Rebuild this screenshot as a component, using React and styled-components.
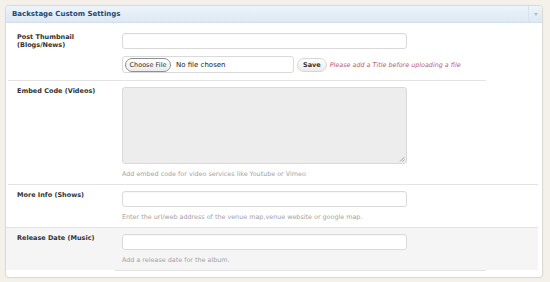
import React from "react";
import styled, { createGlobalStyle } from "styled-components";

const Global = createGlobalStyle`
  html, body { margin: 0; padding: 0; background: #f3f1ea; }
  body { font-family: "DejaVu Sans", "Liberation Sans", sans-serif; }
  #root { width: 550px; height: 282px; }
`;

const Page = styled.div`
  padding: 5px 7px 0 5px;
`;

const Panel = styled.div`
  border: 1px solid #dcdad3;
  border-radius: 4px;
  background: #fff;
  box-shadow: 0 0 2px rgba(0,0,0,0.06);
  overflow: hidden;
  padding-bottom: 6px;
`;

const Header = styled.div`
  height: 16px;
  display: flex;
  align-items: center;
  justify-content: space-between;
  background: linear-gradient(#edf4fb, #dce8f4);
  border-bottom: 1px solid #d3e0ec;
`;

const Title = styled.h3`
  margin: 0 0 0 6px;
  font-size: 7px;
  font-weight: bold;
  color: #244a70;
`;

const Toggle = styled.div`
  width: 13px;
  height: 16px;
  border-left: 1px solid #d6e2ee;
  display: flex;
  align-items: center;
  justify-content: center;
  &::after {
    content: "";
    border-left: 2.5px solid transparent;
    border-right: 2.5px solid transparent;
    border-top: 3px solid #b5bcc4;
  }
`;

const Body = styled.div`
  padding-top: 4px;
  margin-right: 4px;
`;

const Row = styled.div`
  display: grid;
  grid-template-columns: 116px 1fr;
  padding: ${(p) => p.$pad || "6px 0 5px"};
  background: ${(p) => (p.$shaded ? "#f5f5f5" : "transparent")};
`;

const Label = styled.div`
  padding: 1px 0 0 11px;
  font-size: 6.5px;
  line-height: 7.5px;
  font-weight: bold;
  color: #333;
`;

const Field = styled.div`
  display: flex;
  flex-direction: column;
  align-items: flex-start;
`;

const TextInput = styled.div`
  box-sizing: border-box;
  width: 285px;
  height: 16px;
  border: 1px solid #dadada;
  border-radius: 3px;
  background: #fff;
  box-shadow: inset 0 1px 1px rgba(0,0,0,0.03);
`;

const TextArea = styled.div`
  box-sizing: border-box;
  position: relative;
  width: 285px;
  height: 77px;
  border: 1px solid #d9d9d9;
  border-radius: 3px;
  background: #ededed;
`;

const Grip = styled.svg`
  position: absolute;
  right: 1px;
  bottom: 1px;
`;

const FileRow = styled.div`
  display: flex;
  align-items: center;
  margin-top: 7px;
  gap: 3px;
`;

const FileBox = styled.div`
  box-sizing: border-box;
  width: 172px;
  height: 17px;
  border: 1px solid #dadada;
  border-radius: 3px;
  display: flex;
  align-items: center;
  padding-left: 2px;
  gap: 5px;
  font-size: 7px;
  color: #222;
`;

const Pill = styled.div`
  box-sizing: border-box;
  height: 14px;
  padding: 0 ${(p) => (p.$bold ? "5px" : "3.5px")};
  border: 1px solid ${(p) => (p.$bold ? "#d6d6d6" : "#8f8f8f")};
  border-radius: 7px;
  background: linear-gradient(#fefefe, #ececec);
  display: flex;
  align-items: center;
  font-size: 6.5px;
  font-weight: ${(p) => (p.$bold ? "bold" : "normal")};
  color: #333;
`;

const Warning = styled.span`
  margin-left: 0;
  font-size: 6.4px;
  font-style: italic;
  color: #c0606a;
`;

const Desc = styled.div`
  margin-top: 5px;
  font-size: 6.4px;
  line-height: 10px;
  color: #a3a3a3;
`;

const Divider = styled.div`
  height: 1px;
  background: #e3e3e3;
  margin: 0 ${(p) => p.$right || 0}px 0 ${(p) => p.$left || 0}px;
`;

export default function App() {
  return (
    <>
      <Global />
      <Page>
        <Panel>
          <Header>
            <Title>Backstage Custom Settings</Title>
            <Toggle />
          </Header>
          <Body>
            <Row $pad="6px 0 7px">
              <Label>
                Post Thumbnail
                <br />
                (Blogs/News)
              </Label>
              <Field>
                <TextInput />
                <FileRow>
                  <FileBox>
                    <Pill>Choose File</Pill>
                    No file chosen
                  </FileBox>
                  <Pill $bold>Save</Pill>
                  <Warning>Please add a Title before uploading a file</Warning>
                </FileRow>
              </Field>
            </Row>
            <Divider $left={2} $right={52} />
            <Row>
              <Label>Embed Code (Videos)</Label>
              <Field>
                <TextArea>
                  <Grip width="6" height="6" viewBox="0 0 6 6">
                    <path d="M5.5 1 L1 5.5 M5.5 3.5 L3.5 5.5" stroke="#888" strokeWidth="0.7" />
                  </Grip>
                </TextArea>
                <Desc>Add embed code for video services like Youtube or Vimeo</Desc>
              </Field>
            </Row>
            <Divider $left={2} />
            <Row>
              <Label>More Info (Shows)</Label>
              <Field>
                <TextInput />
                <Desc>Enter the url/web address of the venue map,venue website or google map.</Desc>
              </Field>
            </Row>
            <Divider />
            <Row $shaded>
              <Label>Release Date (Music)</Label>
              <Field>
                <TextInput />
                <Desc>Add a release date for the album.</Desc>
              </Field>
            </Row>
            <Divider $left={109} $right={52} />
          </Body>
        </Panel>
      </Page>
    </>
  );
}
